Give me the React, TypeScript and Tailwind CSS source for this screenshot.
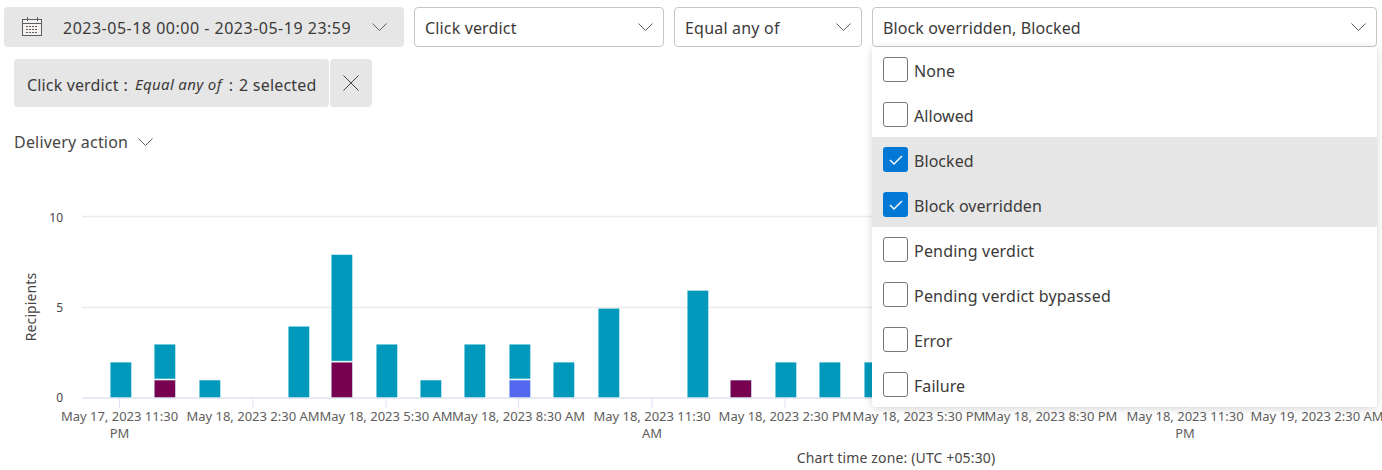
import React from "react";

const font = { fontFamily: '"Noto Sans", "Open Sans", Arial, sans-serif' };

function Chevron({ className = "" }: { className?: string }) {
  return (
    <svg viewBox="0 0 15 8" width="15" height="8" className={className} fill="none" stroke="#605e5c" strokeWidth="1">
      <path d="M0.5 0.5l7 7 7-7" />
    </svg>
  );
}

function CalendarIcon() {
  return (
    <svg viewBox="0 0 21 20" width="21" height="20" fill="none">
      <rect x="0.5" y="2.5" width="19" height="16" fill="#f3f2f1" stroke="#605e5c" />
      <path d="M0.5 6.5h19" stroke="#605e5c" />
      <path d="M5.5 0v4M15.5 0v4" stroke="#605e5c" />
      <path d="M4 9.5h12M4 12.5h12M4 15.5h12" stroke="#605e5c" strokeDasharray="2 1" />
    </svg>
  );
}

function Select({ label, w, track }: { label: string; w: string; track: string }) {
  return (
    <div className={`${w} h-10 flex items-center justify-between pl-[10px] pr-[10px] bg-white border border-[#c8c6c4] rounded-sm text-[#3b3a39] text-base`}>
      <span className={`${track} relative top-px`}>{label}</span>
      <Chevron />
    </div>
  );
}

const options = [
  ["None", false, "tracking-[0.05px]"],
  ["Allowed", false, "tracking-[0.05px]"],
  ["Blocked", true, "tracking-[0.05px]"],
  ["Block overridden", true, "tracking-[0.05px]"],
  ["Pending verdict", false, "tracking-[0.2px]"],
  ["Pending verdict bypassed", false, "tracking-[0.2px]"],
  ["Error", false, "tracking-[0.05px]"],
  ["Failure", false, "tracking-[0.05px]"],
] as const;

type Seg = [number, string];
const TEAL = "#0099bc";
const PLUM = "#770050";
const BLUE = "#5368ee";
const bars: [number, Seg[]][] = [
  [110, [[2, TEAL]]],
  [154, [[1, PLUM], [2, TEAL]]],
  [199, [[1, TEAL]]],
  [288, [[4, TEAL]]],
  [331, [[2, PLUM], [6, TEAL]]],
  [376, [[3, TEAL]]],
  [420, [[1, TEAL]]],
  [464, [[3, TEAL]]],
  [509, [[1, BLUE], [2, TEAL]]],
  [553, [[2, TEAL]]],
  [598, [[5, TEAL]]],
  [687, [[6, TEAL]]],
  [730, [[1, PLUM]]],
  [775, [[2, TEAL]]],
  [819, [[2, TEAL]]],
  [864, [[2, TEAL]]],
];

const ticks: [number, string, string?][] = [
  [119.5, "May 17, 2023 11:30", "PM"],
  [253, "May 18, 2023 2:30 AM"],
  [386, "May 18, 2023 5:30 AM"],
  [518.5, "May 18, 2023 8:30 AM"],
  [652, "May 18, 2023 11:30", "AM"],
  [785, "May 18, 2023 2:30 PM"],
  [919, "May 18, 2023 5:30 PM"],
  [1051, "May 18, 2023 8:30 PM"],
  [1185, "May 18, 2023 11:30", "PM"],
  [1317, "May 19, 2023 2:30 AM"],
];

const UNIT = 17.9;
const BASE = 398;

function Chart() {
  const top = 188;
  return (
    <svg width="1382" height="282" viewBox={`0 ${top} 1382 282`} className="block" style={font}>
      {[216.5, 307.5].map((y) => (
        <line key={y} x1="82" x2="1377" y1={y} y2={y} stroke="#edebe9" strokeWidth="1.5" />
      ))}
      {[[10, 222], [5, 312], [0, 402]].map(([v, y]) => (
        <text key={v} x="63" y={y} textAnchor="end" fontSize="12" fill="#484644">{v}</text>
      ))}
      <text transform="translate(36 307) rotate(-90)" textAnchor="middle" fontSize="14" letterSpacing="0.1" fill="#484644">Recipients</text>
      {bars.map(([x, segs]) => {
        let acc = 0;
        return (
          <g key={x}>
            {segs.map(([v, c], i) => {
              const yTop = BASE - (acc + v) * UNIT;
              const h = v * UNIT - (i > 0 ? 1.2 : 0);
              const r = <rect key={i} x={x + 0.3} y={yTop} width="21" height={h} fill={c} stroke="#b8e4ee" strokeWidth="0.4" />;
              acc += v;
              return r;
            })}
          </g>
        );
      })}
      <line x1="82" x2="1377" y1="398" y2="398" stroke="#dde3f0" strokeWidth="1.5" />
      {ticks.map(([x, a, b]) => (
        <g key={x}>
          <line x1={x} x2={x} y1="398" y2="408" stroke="#dde3f0" />
          <text x={x} y="421" textAnchor="middle" fontSize="13" fill="#605e5c">{a}</text>
          {b && <text x={x} y="438" textAnchor="middle" fontSize="13" fill="#605e5c">{b}</text>}
        </g>
      ))}
      <text x="896" y="463" textAnchor="middle" fontSize="14" letterSpacing="0.14" fill="#484644">Chart time zone: (UTC +05:30)</text>
    </svg>
  );
}

export default function App() {
  return (
    <div className="relative w-[1382px] h-[470px] overflow-hidden bg-white text-[#3b3a39]" style={font}>
      <div className="flex gap-[10px] pt-[7px] pl-1">
        <div className="w-[400px] h-10 flex items-center bg-[#e6e6e6] rounded-sm pl-[18px] text-base">
          <CalendarIcon />
          <span className="ml-[20px] tracking-[0.5px] relative top-px">2023-05-18 00:00 - 2023-05-19 23:59</span>
          <Chevron className="ml-auto mr-[17px]" />
        </div>
        <Select label="Click verdict" w="w-[250px]" track="tracking-[0.15px]" />
        <Select label="Equal any of" w="w-[188px]" track="tracking-[0.2px]" />
        <Select label="Block overridden, Blocked" w="w-[505px]" track="tracking-[0.12px]" />
      </div>

      <div className="flex gap-px pl-[14px] mt-3">
        <div className="w-[315px] h-12 flex items-center pl-[13px] pt-[3px] bg-[#e6e6e6] rounded-sm text-base whitespace-nowrap">
          <span className="tracking-[0.15px]">Click verdict</span>
          <span className="ml-[5px] mr-[7px]">:</span>
          <span className="italic text-[15px] tracking-[0.35px]">Equal any of</span>
          <span className="ml-[7px] mr-[6px]">:</span>
          <span className="tracking-[0.2px]">2 selected</span>
        </div>
        <div className="w-[42px] h-12 flex items-center justify-center bg-[#e6e6e6] rounded-sm">
          <svg viewBox="0 0 16 16" width="16" height="16" fill="none" stroke="#484644" strokeWidth="1">
            <path d="M0.5 0.5l15 15M15.5 0.5l-15 15" />
          </svg>
        </div>
      </div>

      <div className="flex items-center pl-[14px] mt-[23px] h-6 text-base text-[#484644]">
        <span className="tracking-[0.2px]">Delivery action</span>
        <Chevron className="ml-[10px]" />
      </div>

      <div className="mt-[34px]">
        <Chart />
      </div>

      <div className="absolute left-[872px] top-[47px] w-[505px] bg-white rounded-b-sm shadow-[0_2px_8px_rgba(0,0,0,0.16)]">
        {options.map(([label, checked, track]) => (
          <div key={label} className={`h-[45px] flex items-center pl-[11px] text-base ${checked ? "bg-[#e6e6e6]" : ""}`}>
            <span className={`w-[25px] h-[25px] mr-[6px] flex items-center justify-center rounded-[3px] ${checked ? "bg-[#0078d4]" : "bg-white border border-[#797775]"}`}>
              {checked && (
                <svg viewBox="0 0 14 10" width="14" height="10" fill="none" stroke="#fff" strokeWidth="1.4">
                  <path d="M1 5l4 4 8-8" />
                </svg>
              )}
            </span>
            <span className={`${track} relative top-px`}>{label}</span>
          </div>
        ))}
      </div>
    </div>
  );
}
